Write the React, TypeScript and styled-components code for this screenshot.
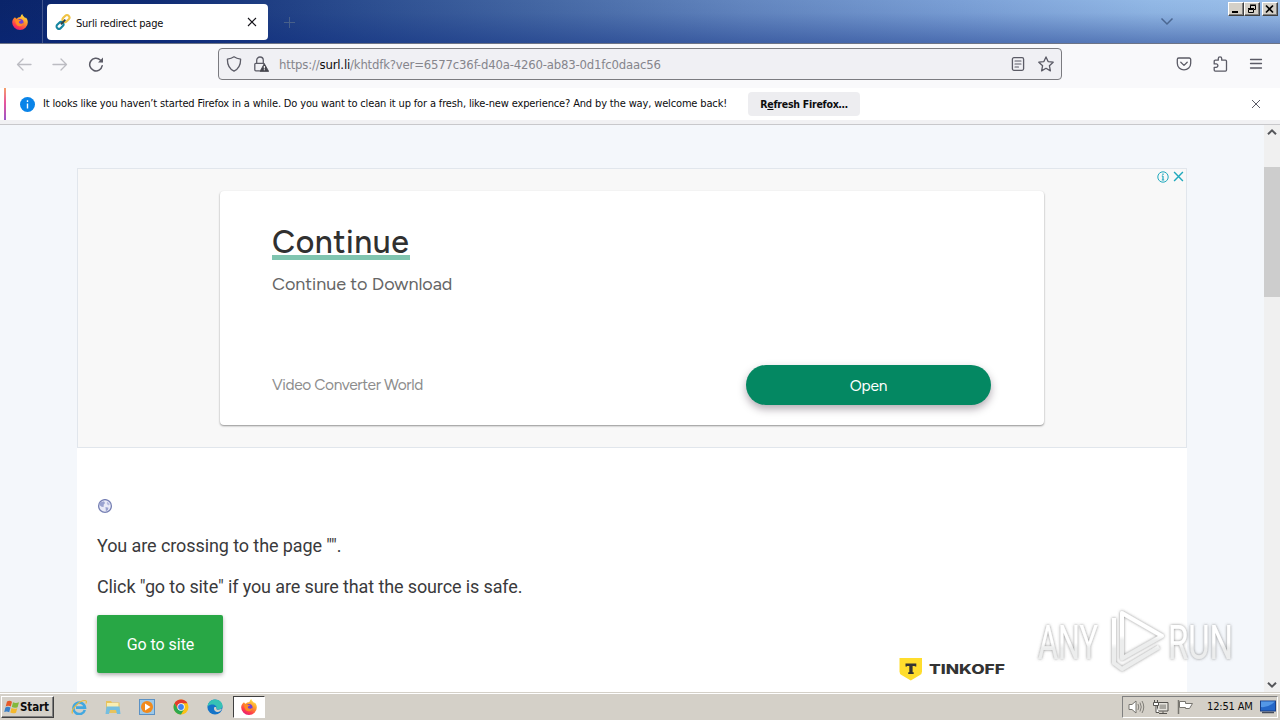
import React from "react";
import styled, { createGlobalStyle } from "styled-components";

const ui = '"DejaVu Sans Condensed", "DejaVu Sans", sans-serif';

const Global = createGlobalStyle`
  * { box-sizing: border-box; }
  html, body { margin: 0; padding: 0; }
  body { width: 1280px; height: 720px; overflow: hidden; background: #fff; }
  svg { display: block; flex: none; }
`;

const Screen = styled.div`
  position: relative;
  display: flex;
  flex-direction: column;
  width: 1280px;
  height: 720px;
  overflow: hidden;
`;

const TitleBar = styled.header`
  display: flex;
  align-items: flex-start;
  flex: none;
  height: 44px;
  border-bottom: 1px solid #6d7486;
  background:
    linear-gradient(180deg, rgba(255,255,255,0) 0%, rgba(20,50,130,0.05) 30%, rgba(10,40,125,0.42) 100%),
    linear-gradient(90deg, #0a246a 0%, #102c74 12%, #2b4d8f 28%, #4669a5 43%, #6386bf 58%, #7ba0d6 75%, #93b9e6 90%, #9cc0ea 100%);
`;

const FoxCell = styled.div`
  display: flex;
  justify-content: center;
  width: 43px;
  height: 43px;
  padding: 14px 2px 0 0;
  border-right: 1px solid #42568e;
`;

const Tab = styled.div`
  display: flex;
  align-items: center;
  width: 221px;
  height: 36px;
  margin: 4px 0 0 4px;
  padding: 0 11px 0 8px;
  border-radius: 4px;
  background: #fff;
`;

const Text = styled.span<{ $size?: number; $gap?: number; $color?: string; $bold?: boolean }>`
  font-family: ${ui};
  font-size: ${(p) => p.$size ?? 11}px;
  letter-spacing: ${(p) => p.$gap ?? 0}px;
  color: ${(p) => p.$color ?? "#0c0c0d"};
  font-weight: ${(p) => (p.$bold ? 700 : 400)};
  line-height: 16px;
  white-space: pre;
`;

const TabTitle = styled(Text)`
  flex: 1;
  margin-left: 5px;
  padding-top: 3px;
`;

const NewTab = styled.div`
  margin: 16px 0 0 15px;
`;

const WindowControls = styled.div`
  display: flex;
  margin: 2px 2px 0 54px;
`;

const TabsMenu = styled.div`
  margin: 15px 0 0 auto;
`;

const WindowButton = styled.div<{ $apart?: boolean }>`
  display: flex;
  align-items: center;
  justify-content: center;
  width: 16px;
  height: 14px;
  margin-left: ${(p) => (p.$apart ? 2 : 0)}px;
  border: 1px solid;
  border-color: #fff #404040 #404040 #fff;
  box-shadow: inset -1px -1px 0 #808080;
  background: #d4d0c8;
`;

const Toolbar = styled.nav`
  display: flex;
  align-items: center;
  flex: none;
  height: 44px;
  padding: 0 16px 4px;
  background: #f9f9fb;
`;

const NavButtons = styled.div`
  display: flex;
  gap: 20px;
  width: 202px;
`;

const AddressBar = styled.div`
  display: flex;
  align-items: center;
  width: 844px;
  height: 32px;
  padding: 0 7px;
  border: 1px solid #7b7b80;
  border-radius: 4px;
  background: #f0f0f4;
`;

const Url = styled.div`
  flex: 1;
  display: flex;
  margin-left: 10px;
  padding-top: 1px;
`;

const AddressIcons = styled.div<{ $gap: number }>`
  display: flex;
  gap: ${(p) => p.$gap}px;
`;

const ToolIcons = styled.div`
  display: flex;
  gap: 20px;
  margin-left: auto;
`;

const Notice = styled.div`
  display: flex;
  align-items: center;
  flex: none;
  height: 37px;
  padding: 0 0 4px 4px;
  border-bottom: 1px solid #c8c8cb;
  background: linear-gradient(#fff 32px, #f1f1f3 32px);
`;

const NoticeAccent = styled.div`
  width: 2px;
  height: 32px;
  background: linear-gradient(#f5a06a, #e8559c 45%, #9a55c8);
`;

const NoticeBody = styled.div`
  display: flex;
  align-items: center;
  flex: 1;
  padding: 0 19px 0 14px;
`;

const NoticeText = styled(Text)`
  width: 705px;
  margin-left: 8px;
  padding-bottom: 1px;
`;

const RefreshButton = styled.div`
  display: flex;
  align-items: center;
  justify-content: center;
  width: 112px;
  height: 24px;
  border-radius: 4px;
  background: #ededf0;
`;

const NoticeClose = styled.div`
  margin-left: auto;
`;

const Viewport = styled.div`
  display: flex;
  flex: none;
  height: 567px;
  background: #f4f7fb;
`;

const Page = styled.main`
  flex: 1;
  display: flex;
  flex-direction: column;
  padding: 43px 77px 0;
`;

const Ad = styled.section`
  position: relative;
  flex: none;
  height: 280px;
  padding: 22px 142px;
  border: 1px solid #e1e6ec;
  background: #f8f8f8;
`;

const AdBadges = styled.div`
  position: absolute;
  top: 0;
  right: 0;
  display: flex;
  align-items: center;
  gap: 4px;
  height: 15px;
  padding: 0 2px;
`;

const AdCard = styled.div`
  display: flex;
  flex-direction: column;
  width: 824px;
  height: 234px;
  padding: 30px 53px 20px 52px;
  border-radius: 4px;
  background: #fff;
  box-shadow: 0 1px 2px rgba(0, 0, 0, 0.42);
`;

const AdTitle = styled.div`
  align-self: flex-start;
  width: 138px;
  height: 39px;
  border-bottom: 5px solid #80c5b0;
  font: 500 32px/42px Figtree, Lato, sans-serif;
  letter-spacing: 0.55px;
  color: #303030;
  white-space: pre;
`;

const AdText = styled.div`
  margin-top: 12px;
  font: 400 18px/24px Figtree, Lato, sans-serif;
  letter-spacing: -0.05px;
  color: #666;
`;

const AdFooter = styled.div`
  display: flex;
  align-items: center;
  justify-content: space-between;
  height: 40px;
  margin-top: auto;
`;

const Advertiser = styled.span`
  font: 400 15.5px/20px Figtree, Lato, sans-serif;
  letter-spacing: -0.4px;
  color: #8d8d8d;
`;

const OpenButton = styled.div`
  width: 245px;
  height: 40px;
  border-radius: 20px;
  background: #048862;
  box-shadow: 0 4px 9px rgba(30, 10, 30, 0.34);
  color: #fff;
  font: 400 15.5px/41px Figtree, Lato, sans-serif;
  letter-spacing: -0.2px;
  text-align: center;
`;

const Article = styled.section`
  flex: 1;
  display: flex;
  flex-direction: column;
  align-items: flex-start;
  padding: 51px 20px 0;
  background: #fff;
`;

const Line = styled.p<{ $top: number; $gap: number }>`
  margin: ${(p) => p.$top}px 0 0;
  font: 400 18px/27px Roboto, sans-serif;
  letter-spacing: ${(p) => p.$gap}px;
  color: #3a3a3c;
`;

const ArticleFoot = styled.div`
  display: flex;
  align-items: flex-start;
  align-self: stretch;
  margin-top: 15px;
`;

const GoButton = styled.div`
  width: 126px;
  height: 58px;
  padding-left: 1px;
  border-radius: 2px;
  background: #28a745;
  box-shadow: 0 2px 4px rgba(0, 0, 0, 0.32);
  color: #fff;
  font: 400 16px/60px Roboto, sans-serif;
  letter-spacing: -0.05px;
  text-align: center;
`;

const Sponsor = styled.div`
  margin: 42px 162px 0 auto;
`;

const Scrollbar = styled.div`
  display: flex;
  flex-direction: column;
  align-items: center;
  justify-content: space-between;
  width: 16px;
  padding: 3px 0;
  background: #f0f0f0;
`;

const Thumb = styled.div`
  width: 16px;
  height: 130px;
  margin: 31px 0 auto;
  background: #cdcdcd;
`;

const Taskbar = styled.footer`
  display: flex;
  align-items: center;
  flex: none;
  height: 28px;
  padding: 1px 2px 0 1px;
  border-top: 1px solid #d4d0c8;
  background: #d4d0c8;
  box-shadow: inset 0 1px 0 #fff;
`;

const StartButton = styled.div`
  display: flex;
  align-items: center;
  width: 53px;
  height: 22px;
  padding-left: 2px;
  border: 1px solid;
  border-color: #fff #404040 #404040 #fff;
  box-shadow: inset -1px -1px 0 #808080;
`;

const QuickLaunch = styled.div`
  display: flex;
  gap: 18px;
  margin-left: 17px;
`;

const ActiveTask = styled.div`
  display: flex;
  align-items: center;
  justify-content: center;
  width: 32px;
  height: 22px;
  margin-left: 10px;
  border: 1px solid;
  border-color: #404040 #fff #fff #404040;
  background: #fff;
`;

const Tray = styled.div`
  display: flex;
  align-items: center;
  width: 156px;
  height: 22px;
  margin-left: auto;
  padding-left: 5px;
  border: 1px solid;
  border-color: #808080 #fff #fff #808080;
`;

const Clock = styled(Text)`
  margin: 0 7px 0 13px;
`;

const TrayIcons = styled.div`
  display: flex;
  gap: 8px;
`;

const Watermark = styled.div`
  position: absolute;
  left: 1032px;
  top: 604px;
`;

const stroke = { fill: "none", stroke: "#5b5b66", strokeWidth: 1.3, strokeLinecap: "round", strokeLinejoin: "round" } as const;

const Firefox = ({ size = 16 }: { size?: number }) => (
  <svg width={size} height={size} viewBox="0 0 16 16">
    <defs>
      <linearGradient id="flame" x1="0.8" y1="0" x2="0.25" y2="1">
        <stop offset="0" stopColor="#fff04a" />
        <stop offset="0.4" stopColor="#ff9a2b" />
        <stop offset="0.75" stopColor="#ff3f4a" />
        <stop offset="1" stopColor="#e3157a" />
      </linearGradient>
    </defs>
    <path d="M3 3.200c.4.8 1 1.300 1.800 1.500C6 2.800 8 3.500 8.500 2.700 8.800 1.500 9.500.6 10.300 0c.1 2 2.200 2.800 3 4.200.3-.2.300-.6.2-1C15 4.300 15.900 6.400 15.800 8.500A7.800 7.500 0 0 1 .2 8.500C.1 6.300 1.300 4.500 3 3.200z" fill="url(#flame)" />
    <circle cx="8" cy="8.600" r="3.500" fill="#7040d5" />
    <path d="M3.200 5.200c1.500-.6 3-.3 4 .7l2 .2c-.5 1-2 1-2.300 1.900-.2 1 .8 1.700 2 1.700 1.500 0 2-1.100 3-.7-.5 2.200-2.300 3.500-4.400 3.300C4.500 12 3 9 3.200 5.200z" fill="#ff8b24" />
  </svg>
);

const LinkIcon = () => (
  <svg width="16" height="16" viewBox="0 0 16 16" fill="none" strokeWidth="2.100">
    <rect x="8.600" y=".7" width="4.800" height="7.600" rx="2.300" transform="rotate(45 11 4.500)" stroke="#efc344" />
    <rect x="2.600" y="7.600" width="4.800" height="7.600" rx="2.300" transform="rotate(45 5 11.400)" stroke="#1685a0" />
    <path d="M5.800 10.400 10.400 5.700" stroke="#344047" strokeWidth="1.800" />
  </svg>
);

const Cross = ({ size, color, width = 1.2 }: { size: number; color: string; width?: number }) => (
  <svg width={size} height={size} viewBox="0 0 10 10">
    <path d="M1 1 9 9M9 1 1 9" stroke={color} strokeWidth={width} />
  </svg>
);

const Chevron = ({ up }: { up?: boolean }) => (
  <svg width="10" height="8" viewBox="0 0 10 8">
    <path d={up ? "M1 6.300 5 2.300 9 6.300" : "M1 1.700 5 5.700 9 1.700"} fill="none" stroke="#55565a" strokeWidth="2" />
  </svg>
);

const Arrow = ({ back }: { back?: boolean }) => (
  <svg width="16" height="16" viewBox="0 0 16 16">
    <path d={back ? "M15 8.500H1.500M7 3 1.500 8.500 7 14" : "M1 8.500h13.500M9 3 14.500 8.500 9 14"} {...stroke} stroke="#bcbcc2" />
  </svg>
);

export default function App() {
  return (
    <Screen>
      <Global />
      <TitleBar>
        <FoxCell><Firefox /></FoxCell>
        <Tab>
          <LinkIcon />
          <TabTitle $gap={-0.22}>Surli redirect page</TabTitle>
          <Cross size={10} color="#15141a" width={1.1} />
        </Tab>
        <NewTab>
          <svg width="13" height="13" viewBox="0 0 13 13"><path d="M6.500 1v11M1 6.500h11" stroke="#48608a" /></svg>
        </NewTab>
        <TabsMenu>
          <svg width="14" height="12" viewBox="0 0 14 12"><path d="M1.500 3.500 7 9l5.500-5.500" fill="none" stroke="#4b6791" strokeWidth="1.500" /></svg>
        </TabsMenu>
        <WindowControls>
          <WindowButton>
            <svg width="12" height="10" viewBox="0 0 12 10"><path d="M2 8h6" stroke="#000" strokeWidth="2" /></svg>
          </WindowButton>
          <WindowButton>
            <svg width="12" height="10" viewBox="0 0 12 10">
              <path d="M4.500 4V1.500h5v4H8M4 1h6M2.500 5.500h5v3h-5zM2 4.500h6" fill="none" stroke="#000" />
            </svg>
          </WindowButton>
          <WindowButton $apart>
            <svg width="12" height="10" viewBox="0 0 12 10"><path d="M2 1.500 9 8.500M9 1.500 2 8.500" stroke="#000" strokeWidth="1.700" /></svg>
          </WindowButton>
        </WindowControls>
      </TitleBar>

      <Toolbar>
        <NavButtons>
          <Arrow back />
          <Arrow />
          <svg width="16" height="16" viewBox="0 0 16 16">
            <path d="M14.200 9.700a6.300 6.300 0 1 1-1.900-5.700L14 5.500" {...stroke} strokeWidth="1.500" />
            <path d="M15 1.500v5h-5z" fill="#5b5b66" />
          </svg>
        </NavButtons>
        <AddressBar>
          <AddressIcons $gap={11}>
            <svg width="16" height="16" viewBox="0 0 16 16">
              <path d="M8 .8c1.800 1.300 4 2 6.600 2.300.1 5-1.300 9.600-6.600 12.100C2.700 12.700 1.300 8.100 1.400 3.100 4 2.800 6.200 2.100 8 .8z" {...stroke} />
            </svg>
            <svg width="16" height="16" viewBox="0 0 16 16">
              <path d="M6.500 14.800H2.800a1 1 0 0 1-1-1V8.300a1 1 0 0 1 1-1h8M3.700 7V4.300a3.300 3.300 0 0 1 6.600 0V7" {...stroke} />
              <path d="M11.300 7.600 7 15.400h8.700z" fill="#45454e" stroke="#45454e" strokeLinejoin="round" strokeWidth=".8" />
              <path d="M11.350 10v2.600M11.350 13.300v1" stroke="#fff" strokeWidth="1.100" />
            </svg>
          </AddressIcons>
          <Url>
            <Text $size={13} $gap={-0.18} $color="#85858c">https://</Text>
            <Text $size={13} $gap={-0.18}>surl.li</Text>
            <Text $size={13} $gap={-0.18} $color="#85858c">/khtdfk?ver=6577c36f-d40a-4260-ab83-0d1fc0daac56</Text>
          </Url>
          <AddressIcons $gap={12}>
            <svg width="16" height="16" viewBox="0 0 16 16">
              <rect x="2.400" y="1.700" width="11.200" height="12.600" rx="1.500" {...stroke} />
              <path d="M5 5h6M5 8h6M5 11h3.500" {...stroke} strokeWidth="1.100" />
            </svg>
            <svg width="16" height="16" viewBox="0 0 16 16">
              <path d="M8 .9l2.100 4.700 5.100.6-3.800 3.500 1 5.200L8 12.300l-4.400 2.600 1-5.200L.8 6.200l5.100-.6z" {...stroke} />
            </svg>
          </AddressIcons>
        </AddressBar>
        <ToolIcons>
          <svg width="16" height="16" viewBox="0 0 16 16">
            <path d="M2.800 2h10.400a1.500 1.500 0 0 1 1.500 1.500v3.700a6.700 6.700 0 0 1-13.400 0V3.500A1.500 1.500 0 0 1 2.800 2zM4.800 6.200 8 9.400l3.200-3.200" {...stroke} />
          </svg>
          <svg width="16" height="16" viewBox="0 0 16 16">
            <path d="M2.200 5.200a1 1 0 0 1 1-1H6.300V2.600a1.700 1.700 0 0 1 3.400 0v1.600h3.800a1 1 0 0 1 1 1v8.900a1 1 0 0 1-1 1H3.200a1 1 0 0 1-1-1v-2.800h2a1.700 1.700 0 0 0 0-3.400h-2z" {...stroke} />
          </svg>
          <svg width="16" height="16" viewBox="0 0 16 16"><path d="M2.500 3.500h11M2.500 7.500h11M2.500 12h11" {...stroke} /></svg>
        </ToolIcons>
      </Toolbar>

      <Notice>
        <NoticeAccent />
        <NoticeBody>
          <svg width="15" height="15" viewBox="0 0 15 15">
            <circle cx="7.500" cy="7.500" r="7.500" fill="#0a84e8" />
            <path d="M7.500 6.500v5M7.500 3.200v1.700" stroke="#fff" strokeWidth="1.400" />
          </svg>
          <NoticeText $gap={-0.148}>It looks like you haven’t started Firefox in a while. Do you want to clean it up for a fresh, like-new experience? And by the way, welcome back!</NoticeText>
          <RefreshButton>
            <Text $bold $gap={-0.25} $size={10.5}>R<u>e</u>fresh Firefox…</Text>
          </RefreshButton>
          <NoticeClose><Cross size={10} color="#5b5b66" width={1} /></NoticeClose>
        </NoticeBody>
      </Notice>

      <Viewport>
        <Page>
          <Ad>
            <AdBadges>
              <svg width="12" height="12" viewBox="0 0 12 12" fill="none" stroke="#20a9bd">
                <circle cx="6" cy="6" r="5.200" />
                <path d="M6 5v4M4.800 5H6M4.800 9h2.400M6 2.600v1.300" strokeWidth="1.200" />
              </svg>
              <Cross size={11} color="#20a9bd" width={1.300} />
            </AdBadges>
            <AdCard>
              <AdTitle>Continue</AdTitle>
              <AdText>Continue to Download</AdText>
              <AdFooter>
                <Advertiser>Video Converter World</Advertiser>
                <OpenButton>Open</OpenButton>
              </AdFooter>
            </AdCard>
          </Ad>
          <Article>
            <svg width="16" height="16" viewBox="0 0 16 16">
              <circle cx="8" cy="7" r="6.400" fill="#e9ebf7" stroke="#7780b4" strokeWidth="1.300" />
              <path d="M3 3.500 7 2.200 8 4 6.500 6 7 7.500 5 8 2.300 6zM8.500 8l3 .7-.6 2.300-2 1.300z" fill="#9aa3d0" />
              <path d="M10 2.500 13 5l-1.500 1.500L9.800 5z" fill="#b6bce0" />
            </svg>
            <Line $top={17} $gap={-0.09}>You are crossing to the page "".</Line>
            <Line $top={14} $gap={-0.12}>Click "go to site" if you are sure that the source is safe.</Line>
            <ArticleFoot>
              <GoButton>Go to site</GoButton>
              <Sponsor>
                <svg width="106" height="24" viewBox="0 0 106 24">
                  <path d="M.5 1h22.500v13.500q0 2.300-2 3.500l-9.200 5.500L2.500 18q-2-1.200-2-3.500z" fill="#ffdd2d" />
                  <path d="M6.500 9.500V6.500h10.800v3h-1.500V9h-2.200v6.200h1.100V17H9.200v-1.800h1.100V9H8v.5z" fill="#333" />
                  <text x="30" y="17" textLength="76" lengthAdjust="spacingAndGlyphs" fontFamily="Inter, sans-serif" fontWeight="800" fontSize="13.500" fill="#333">TINKOFF</text>
                </svg>
              </Sponsor>
            </ArticleFoot>
          </Article>
        </Page>
        <Scrollbar>
          <Chevron up />
          <Thumb />
          <Chevron />
        </Scrollbar>
      </Viewport>

      <Taskbar>
        <StartButton>
          <svg width="16" height="16" viewBox="0 0 16 16">
            <path d="M3 2.500Q5.500 1 8 2.700L6.800 7.600Q4.300 6.200 1.700 7.400z" fill="#e65a28" />
            <path d="M9 3.200q2.500 1.500 6 .1l-1.400 4.900Q10.500 9.500 7.800 8z" fill="#83b83c" />
            <path d="M1.400 8.400Q4 7.200 6.500 8.600L5.200 13.200Q2.700 11.800.2 13z" fill="#3a80c8" />
            <path d="M7.500 9.100q2.700 1.400 5.800.1L12 13.700q-3 1.300-5.700-.1z" fill="#f4b82c" />
          </svg>
          <Text $bold $gap={-0.1} $size={11.5}>Start</Text>
        </StartButton>
        <QuickLaunch>
          <svg width="16" height="16" viewBox="0 0 16 16" fill="none">
            <path d="M13.800 11A5.800 5.800 0 1 1 14 8.600H5" stroke="#43a8e0" strokeWidth="2.600" />
            <path d="M1.500 14.500C-.5 11 8 1.500 14 1.500c2 0 1.500 2 .8 3" stroke="#e9bb3d" strokeWidth="1.200" />
          </svg>
          <svg width="16" height="16" viewBox="0 0 16 16">
            <path d="M1 2h5l1 1.500h7.500V14H1z" fill="#e8c35c" />
            <path d="M2 4h11.500v4H2z" fill="#f9eeb2" />
            <path d="M1.500 7.500h13L15.500 15H12l-1-4H5l-1 4H.5z" fill="#74bee0" />
          </svg>
          <svg width="16" height="16" viewBox="0 0 16 16">
            <rect x=".5" y=".5" width="15" height="15" fill="#9cc8e8" stroke="#5b91c4" />
            <circle cx="8" cy="8" r="6" fill="#f18a1c" />
            <path d="M6 4.500v7L11.500 8z" fill="#fff" />
          </svg>
          <svg width="16" height="16" viewBox="0 0 16 16">
            <circle cx="8" cy="8" r="7.500" fill="#fbc116" />
            <path d="M8 8 4.700 9.900 1.500 4.300A7.500 7.500 0 0 1 14.500 4.300H8z" fill="#e33b2e" />
            <path d="M1.500 4.300A7.500 7.500 0 0 0 8 15.500L11.200 9.900 8 8 4.700 9.900z" fill="#2da94f" />
            <circle cx="8" cy="8" r="3.700" fill="#fff" />
            <circle cx="8" cy="8" r="2.900" fill="#4083ee" />
          </svg>
          <svg width="16" height="16" viewBox="0 0 16 16">
            <circle cx="8" cy="8" r="7.600" fill="#1474c8" />
            <path d="M.5 7.500C1 3 4.500.4 8 .4c4.300 0 7.500 3 7.500 6.300 0 2.300-2 3.800-4.200 3.800-1.800 0-2.200-.8-1.800-1.400C10.500 6.500 5 3.500.5 7.500z" fill="#36c2b5" />
            <path d="M9.300 9.400c-.2.900.8 1.400 2.200 1.400 1.300 0 2.600-.5 3.500-1.200-.7 2.700-3 3.700-5 3.400-2.400-.4-3.800-3-2.500-5 1.300-.4 2.200.4 1.800 1.400z" fill="#d4d0c8" />
          </svg>
        </QuickLaunch>
        <ActiveTask><Firefox /></ActiveTask>
        <Tray>
          <TrayIcons>
            <svg width="17" height="16" viewBox="0 0 17 16" fill="none" stroke="#77756f">
              <path d="M1 5.500h3L8 2v12l-4-3.500H1z" fill="#fff" />
              <path d="M10 5q1.500 3 0 6M12 3.500q2.500 4.500 0 9M14 2q3.500 6 0 12" strokeWidth=".9" />
            </svg>
            <svg width="16" height="16" viewBox="0 0 16 16" fill="none" stroke="#55534f">
              <path d="M4.500 3.500h10.500v8.500h-10.500z" fill="#e4e2dc" />
              <path d="M6.500 5.500h6.500v4.500h-6.500z" fill="#a8a6a0" stroke="none" />
              <path d="M6 14.500h8M10 12.500v2" />
              <path d="M.5 3.500h5v3h-5zM1.500 1v2M4.500 1v2M3 6.500v7h3" fill="#fff" />
            </svg>
            <svg width="17" height="16" viewBox="0 0 17 16">
              <path d="M1.500 1v14" stroke="#77756f" strokeWidth="1.500" />
              <path d="M2.500 2.500h6v2h7L12.500 9.500h-4v-1h-6z" fill="#fff" stroke="#77756f" />
            </svg>
          </TrayIcons>
          <Clock $gap={-0.15}>12:51 AM</Clock>
          <svg width="16" height="14" viewBox="0 0 16 14">
            <rect x=".5" y="1" width="15" height="10" fill="#2567c8" stroke="#1b3f86" />
            <path d="M1 7Q8 8 15 1.500H1z" fill="#5497e6" />
            <path d="M2 12.500h12" stroke="#444c5c" strokeWidth="1.500" />
          </svg>
        </Tray>
      </Taskbar>

      <Watermark>
        <svg width="212" height="74" viewBox="0 0 212 74">
          <defs>
            <filter id="glow" x="-10%" y="-10%" width="120%" height="120%">
              <feDropShadow dx="0" dy="0" stdDeviation="1.600" floodColor="#666" floodOpacity="0.750" />
            </filter>
            <linearGradient id="fade" x1="0" y1="0" x2="0" y2="1">
              <stop offset="0.500" stopColor="#fff" />
              <stop offset="0.600" stopColor="#eceded" />
            </linearGradient>
          </defs>
          <g filter="url(#glow)">
            <g fontFamily="Roboto, sans-serif" fontWeight="400" fontSize="48.500" fill="url(#fade)">
              <text x="6" y="55" textLength="60" lengthAdjust="spacingAndGlyphs">ANY</text>
              <text x="136" y="55" textLength="65" lengthAdjust="spacingAndGlyphs">RUN</text>
            </g>
            <g fill="none" stroke="url(#fade)" strokeWidth="4" strokeLinejoin="round">
              <path d="M90 9v45.500L130 32z" />
              <path d="M82 14v45l8 6 37-22" />
            </g>
          </g>
        </svg>
      </Watermark>
    </Screen>
  );
}
